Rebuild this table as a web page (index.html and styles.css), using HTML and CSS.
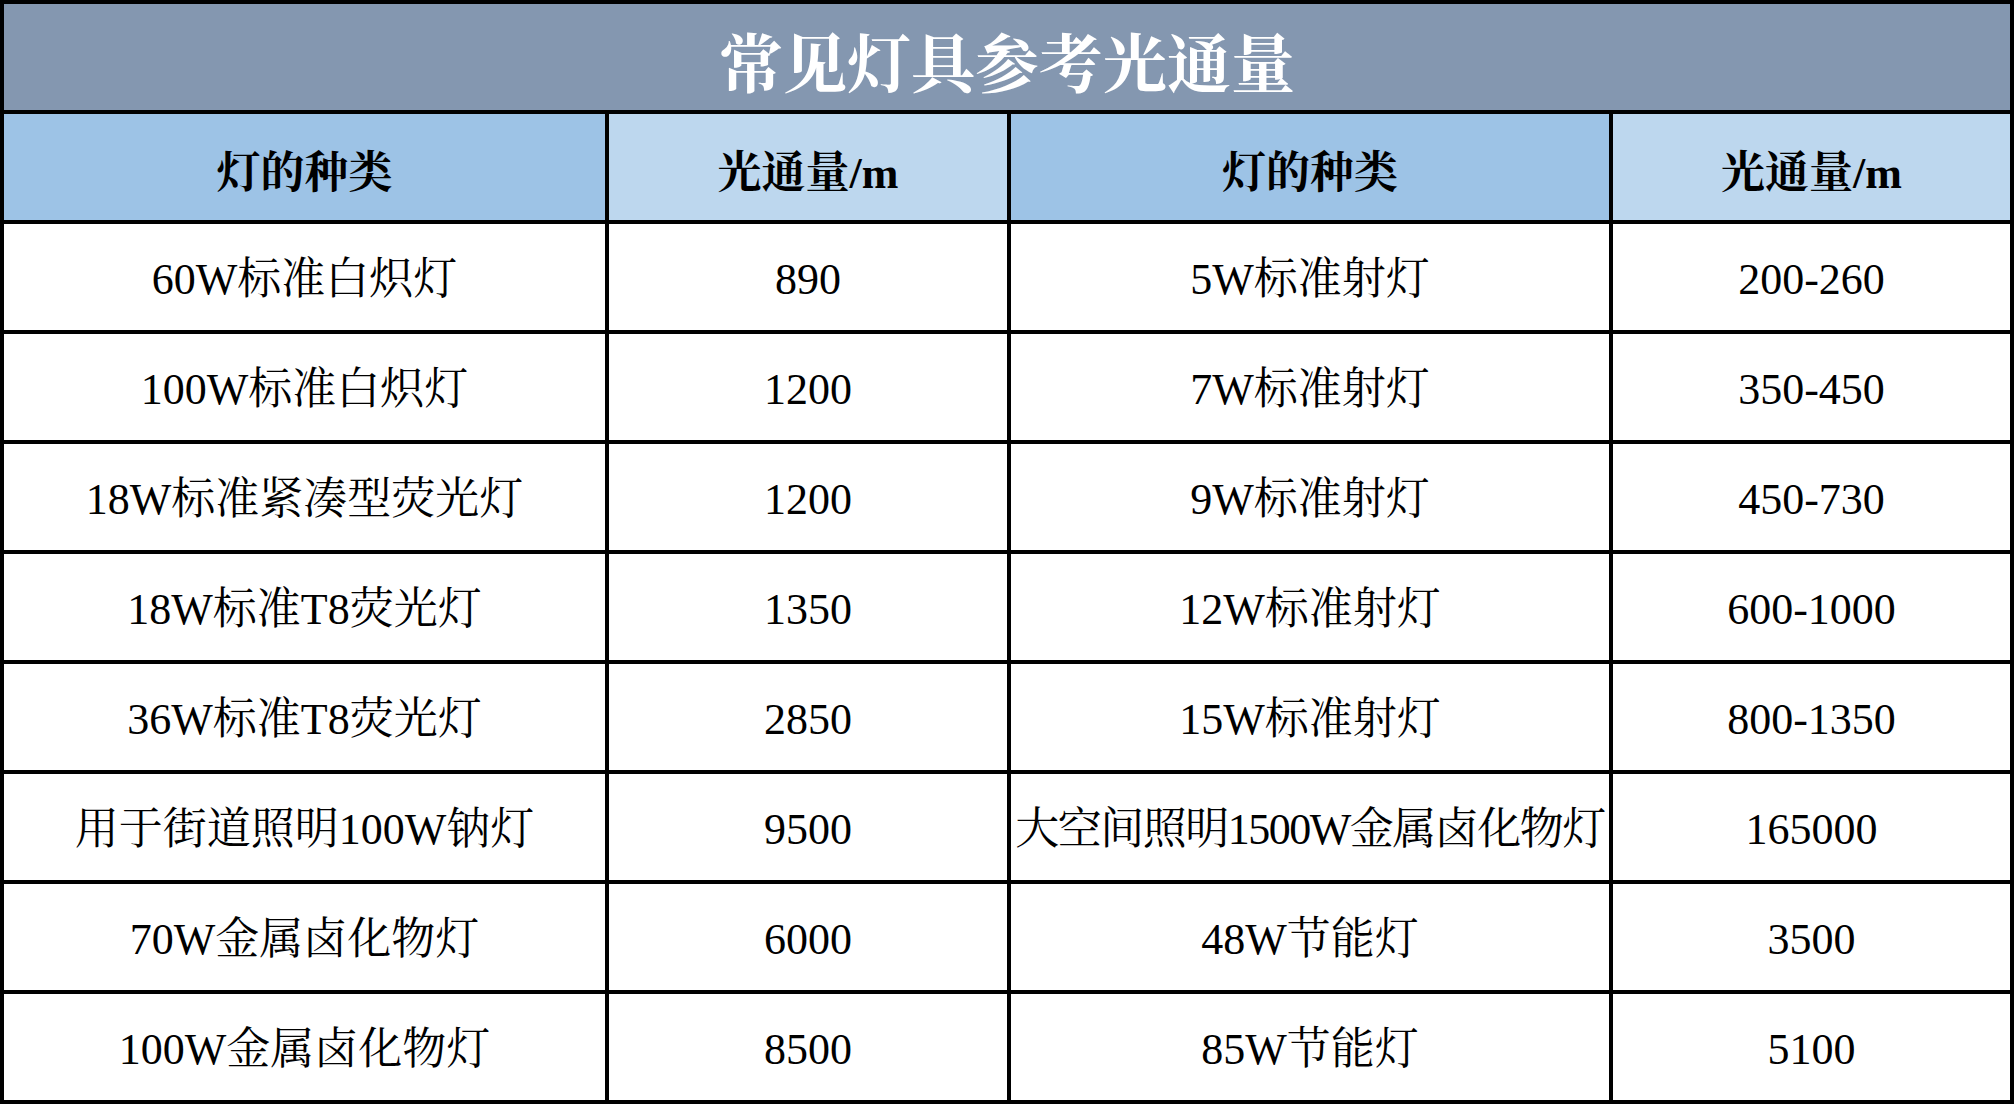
FILE: index.html
```html
<!DOCTYPE html>
<html lang="zh-CN">
<head>
<meta charset="utf-8">
<title>常见灯具参考光通量</title>
<link rel="stylesheet" href="styles.css">
</head>
<body>
<div class="sheet">
  <div class="cell title">常见灯具参考光通量</div>
  <div class="cell head head-a">灯的种类</div>
  <div class="cell head head-b">光通量/m</div>
  <div class="cell head head-a">灯的种类</div>
  <div class="cell head head-b">光通量/m</div>

  <div class="cell">60W标准白炽灯</div><div class="cell">890</div><div class="cell">5W标准射灯</div><div class="cell">200-260</div>
  <div class="cell">100W标准白炽灯</div><div class="cell">1200</div><div class="cell">7W标准射灯</div><div class="cell">350-450</div>
  <div class="cell">18W标准紧凑型荧光灯</div><div class="cell">1200</div><div class="cell">9W标准射灯</div><div class="cell">450-730</div>
  <div class="cell">18W标准T8荧光灯</div><div class="cell">1350</div><div class="cell">12W标准射灯</div><div class="cell">600-1000</div>
  <div class="cell">36W标准T8荧光灯</div><div class="cell">2850</div><div class="cell">15W标准射灯</div><div class="cell">800-1350</div>
  <div class="cell">用于街道照明100W钠灯</div><div class="cell">9500</div><div class="cell tight">大空间照明1500W金属卤化物灯</div><div class="cell">165000</div>
  <div class="cell">70W金属卤化物灯</div><div class="cell">6000</div><div class="cell">48W节能灯</div><div class="cell">3500</div>
  <div class="cell">100W金属卤化物灯</div><div class="cell">8500</div><div class="cell">85W节能灯</div><div class="cell">5100</div>
</div>
</body>
</html>
```

FILE: styles.css
```css
html, body {
  margin: 0;
  padding: 0;
  background: #ffffff;
}

.sheet {
  width: 2014px;
  box-sizing: border-box;
  display: grid;
  grid-template-columns: 601px 398px 598px 397px;
  grid-auto-rows: 106px;
  gap: 4px;
  padding: 4px;
  background: #000000;
  font-family: "Liberation Serif", "Noto Serif CJK SC", "Noto Sans CJK SC", serif;
}

.cell {
  background: #ffffff;
  color: #000000;
  display: flex;
  align-items: center;
  justify-content: center;
  font-size: 44px;
  line-height: 1;
  white-space: nowrap;
  box-sizing: border-box;
  padding-top: 6px;
}

.tight {
  letter-spacing: -1.5px;
}

.title {
  grid-column: 1 / -1;
  background: #8497b0;
  color: #ffffff;
  font-size: 64px;
  font-weight: 700;
  padding-top: 18px;
}

.head {
  font-weight: 700;
  padding-top: 14px;
}

.head-a {
  background: #9dc3e6;
}

.head-b {
  background: #bdd7ee;
}
```
